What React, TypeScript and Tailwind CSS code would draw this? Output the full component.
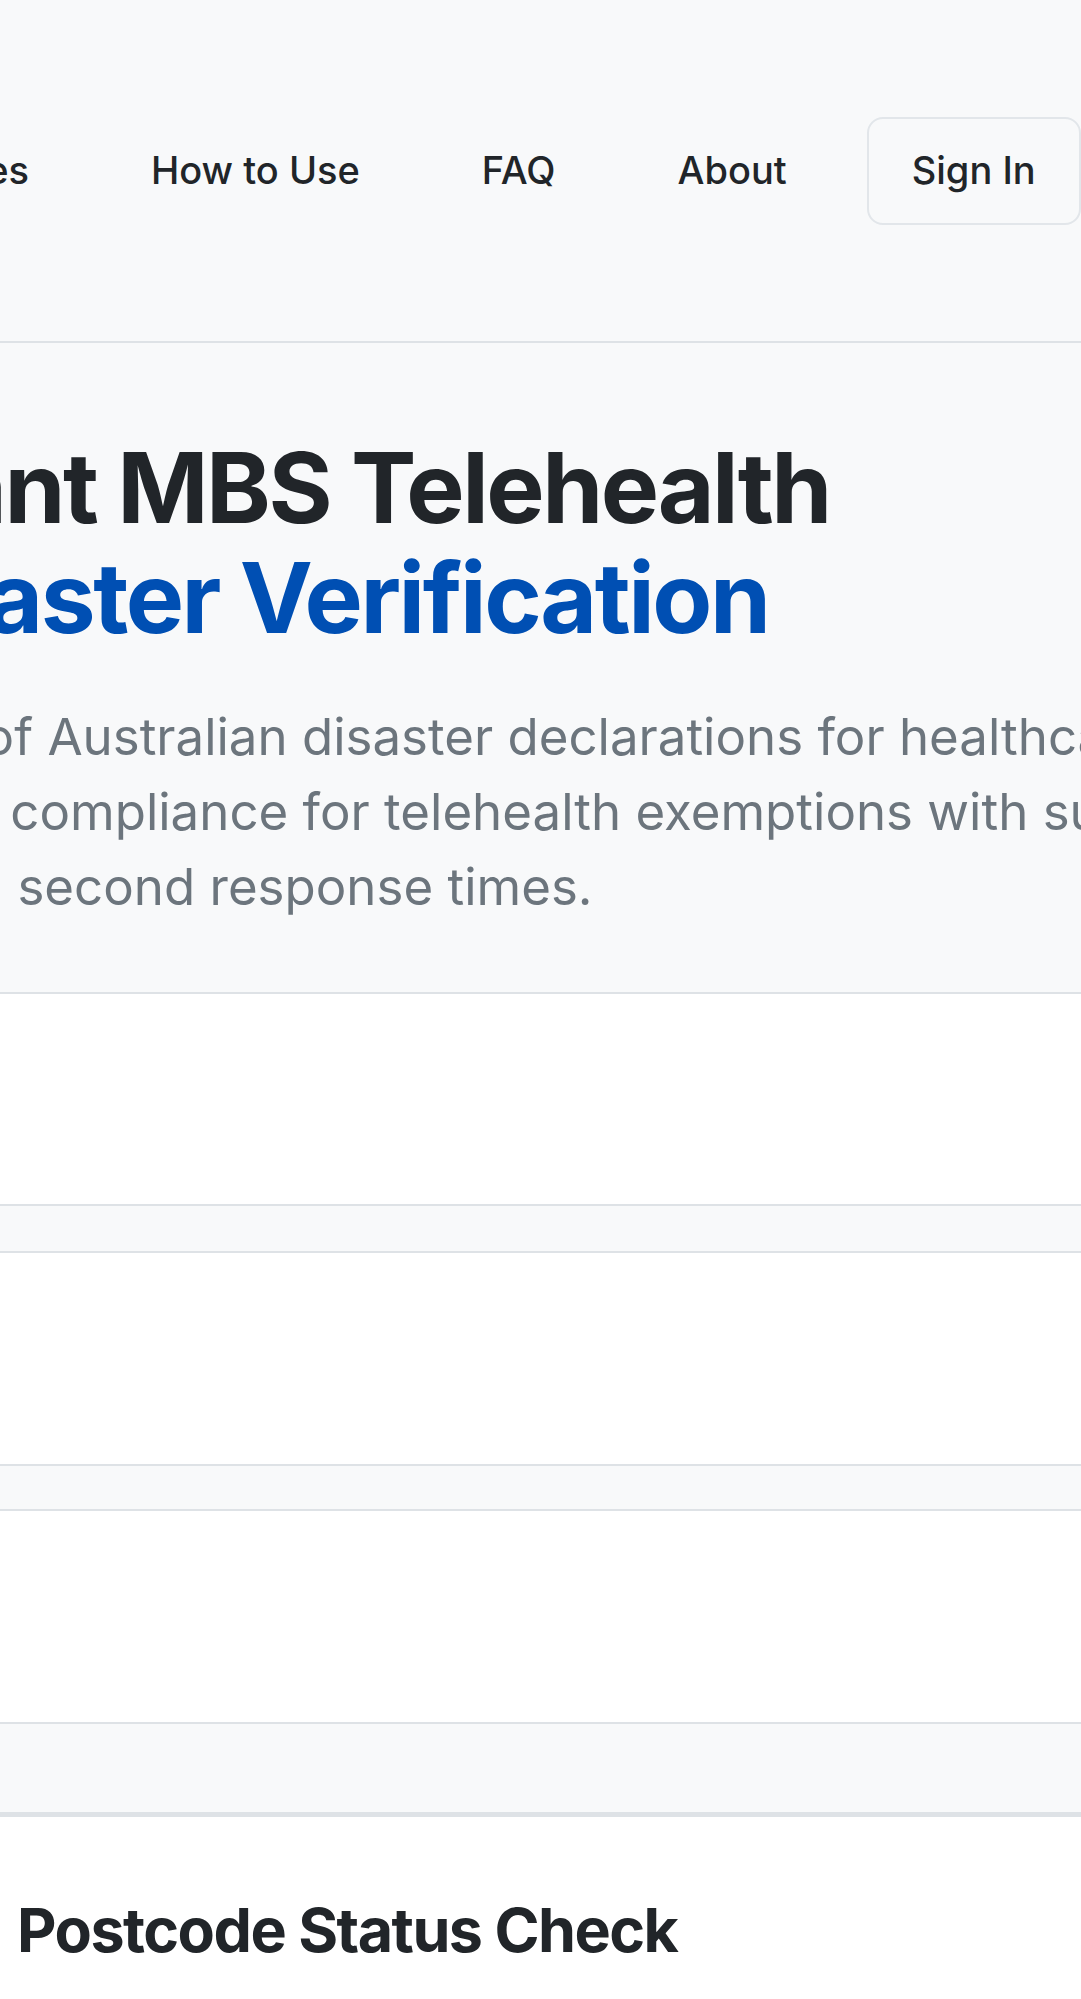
import React from 'react';

const navLinks = ['How to Use', 'FAQ', 'About'];

const Band: React.FC<{ className?: string }> = ({ className = '' }) => (
    <div className={`bg-[#f8f9fa] border-[#dee2e6] ${className}`} />
);

const App: React.FC = () => {
    return (
        <div className="w-full min-h-screen overflow-hidden bg-white font-['Inter',sans-serif] text-[#212529]">
            <header className="h-[343px] bg-[#f8f9fa] border-b-2 border-[#dee2e6] flex items-center">
                <nav className="flex items-center text-[38px] font-medium whitespace-nowrap">
                    <div className="w-[90px] shrink-0 flex justify-end">
                        <a className="pr-[61px]">Features</a>
                    </div>
                    {navLinks.map(link => (
                        <a key={link} className="px-[61px] shrink-0">{link}</a>
                    ))}
                    <button className="ml-[19px] shrink-0 h-[108px] px-[43px] rounded-[16px] border-2 border-[#e2e6ea]">
                        Sign In
                    </button>
                </nav>
            </header>

            <section className="h-[651px] bg-[#f8f9fa] border-b-2 border-[#dee2e6] pt-[90px]">
                {/* hero column is wider than the viewport, centred at x=305 */}
                <div className="w-[2000px] -ml-[695px] text-center">
                    <h1 className="text-[98px] leading-[110px] font-bold tracking-tight">
                        <span className="block">Instant MBS Telehealth</span>
                        <span className="block text-[#004fb3]">Disaster Verification</span>
                    </h1>
                    <p className="mt-[46px] text-[51px] leading-[75px] text-[#6c757d] whitespace-nowrap">
                        <span className="block">Real-time verification of Australian disaster declarations for healthcare</span>
                        <span className="block">providers ensuring full compliance for telehealth exemptions with sub-</span>
                        <span className="block">second response times.</span>
                    </p>
                </div>
            </section>

            <div className="h-[210px]" />
            <Band className="h-[49px] border-y-2" />
            <div className="h-[211px]" />
            <Band className="h-[47px] border-y-2" />
            <div className="h-[211px]" />
            <Band className="h-[95px] border-t-2 border-b-[5px]" />

            <section className="pt-[75px] pl-[17px] pb-[200px]">
                <h2 className="text-[61px] leading-[76px] font-bold tracking-tight">Postcode Status Check</h2>
            </section>
        </div>
    );
};

export default App;
